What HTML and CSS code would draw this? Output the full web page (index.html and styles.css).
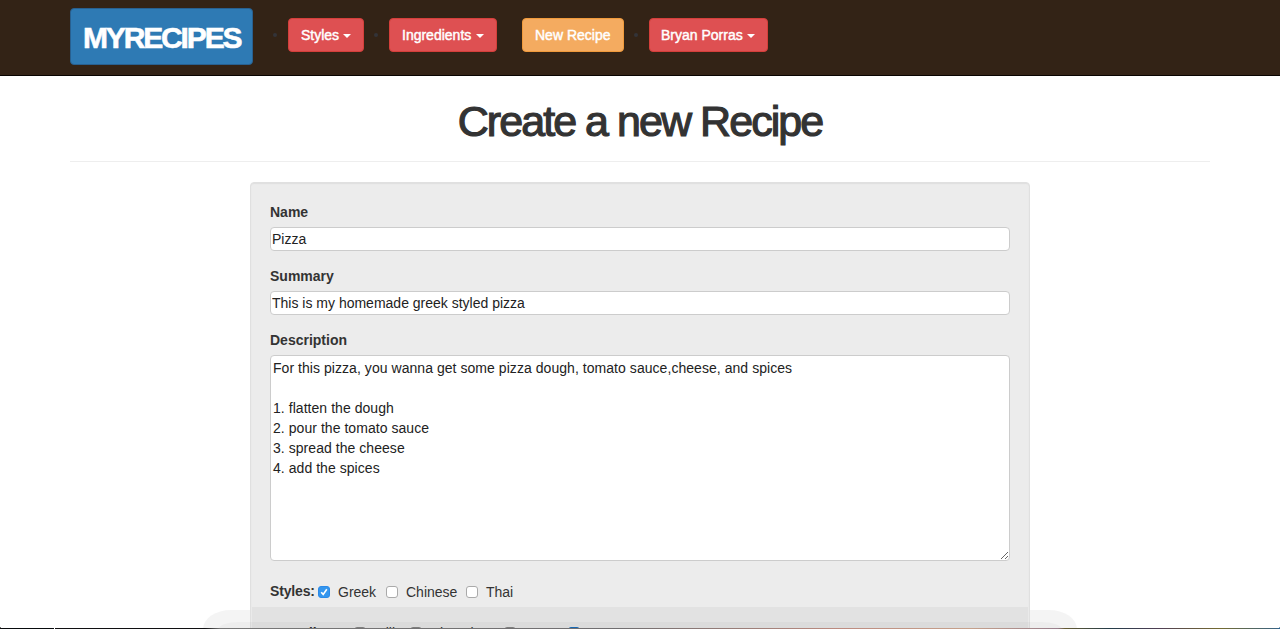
FILE: index.html
```html
<!DOCTYPE html>
<html lang="en">
<head>
<meta charset="utf-8">
<title>MyRecipes</title>
<link rel="stylesheet" href="styles.css">
</head>
<body>
<header class="navbar">
  <div class="container nav-row">
    <a class="logo"><span>MYRECIPES</span></a>
    <ul class="nav">
      <li class="dot"><a class="btn styles"><span>Styles</span><i class="caret"></i></a></li>
      <li class="dot"><a class="btn ingredients"><span>Ingredients</span><i class="caret"></i></a></li>
      <li><a class="btn warning"><span>New Recipe</span></a></li>
      <li class="dot"><a class="btn user"><span>Bryan Porras</span><i class="caret"></i></a></li>
    </ul>
  </div>
</header>
<main class="container">
  <h1><span>Create a new Recipe</span></h1>
  <form class="well">
    <label class="label" for="name">Name</label>
    <input class="field" id="name" value="Pizza">
    <label class="label" for="summary">Summary</label>
    <input class="field" id="summary" value="This is my homemade greek styled pizza">
    <label class="label" for="description">Description</label>
    <textarea class="field area" id="description">For this pizza, you wanna get some pizza dough, tomato sauce,cheese, and spices

1. flatten the dough
2. pour the tomato sauce
3. spread the cheese
4. add the spices</textarea>
    <div class="checks">
      <b class="styles-label">Styles:</b>
      <label class="check greek"><i class="box on"><svg viewBox="0 0 10 10"><path d="M2.2 5.2 4.2 7.4 7.8 2.2"/></svg></i>Greek</label>
      <label class="check chinese"><i class="box"></i>Chinese</label>
      <label class="check"><i class="box"></i>Thai</label>
    </div>
    <div class="checks next">
      <b class="ingredients-label">Ingredients:</b>
      <label class="check milk"><i class="box"></i>Milk</label>
      <label class="check chocolate"><i class="box"></i>Chocolate</label>
      <label class="check sugar"><i class="box"></i>Sugar</label>
      <label class="check"><i class="box on"></i>Tomato</label>
    </div>
  </form>
</main>
<div class="panel-shade"></div>
<div class="dock-shade"><div class="dock-inner"></div></div>
<div class="desktop-edge"></div>
<div class="corner left"></div>
<div class="corner right"></div>
</body>
</html>
```
FILE: styles.css
```css
* { box-sizing: border-box; }
html, body { margin: 0; height: 629px; overflow: hidden; }
body { position: relative; background: #fff; color: #333; font: 14px/20px "Helvetica Neue", "Liberation Sans", Arial, sans-serif; }
.container { width: 1140px; margin: 0 auto; }
.navbar { height: 76px; background: #332316; border-bottom: 1px solid #090401; }
.nav-row { display: flex; align-items: flex-start; padding-top: 8px; }
.logo { width: 183px; height: 57px; padding: 12px; border: 1px solid #286090; border-radius: 4px; background: #2e7ab4; color: #fff; font-size: 30px; font-weight: 700; line-height: 34px; letter-spacing: -2.15px; white-space: nowrap; -webkit-text-stroke: .6px #fff; }
.nav { display: flex; gap: 25px; margin: 10px 0 0 35px; padding: 0; list-style: none; }
.nav li { display: flex; position: relative; }
.dot::before { content: ""; position: absolute; left: -15px; top: 15px; width: 4px; height: 4px; border-radius: 50%; background: #333338; }
.btn { display: flex; align-items: center; padding-left: 12px; height: 34px; border: 1px solid #d43f3a; border-radius: 4px; background: #de5052; color: #fff; letter-spacing: 0; white-space: nowrap; -webkit-text-stroke: .45px #fff; }
.styles { width: 76px; }
.ingredients { width: 108px; }
.warning { width: 102px; border-color: #f09a3c; background: #f4ab60; }
.user { width: 119px; padding-left: 11px; }
.caret { margin: 2px 12px 0 auto; border: 4px solid transparent; border-top-color: #fff; border-bottom: 0; }
h1 { height: 86px; margin: 0 0 20px; padding-top: 21px; border-bottom: 1px solid #eee; font-size: 43px; font-weight: 400; line-height: 48px; letter-spacing: -1.95px; text-align: center; -webkit-text-stroke: 1.2px #333; }
.well { width: 780px; height: 460px; margin: 0 auto; padding: 19px; border: 1px solid #e0e0e0; border-radius: 4px; background: #ececec; box-shadow: inset 0 1px 1px #dfdfdf; }
.label { display: block; height: 20px; margin-bottom: 5px; font-weight: 700; }
.field { display: block; width: 740px; height: 24px; margin: 0 0 15px; padding: 1px; border: 1px solid #ccc; border-radius: 4px; outline: 0; background: #fff; color: #222; font: inherit; }
.area { height: 206px; padding: 2px; line-height: 20px; letter-spacing: .05px; resize: vertical; overflow: hidden; }
.checks { display: flex; align-items: center; height: 20px; margin-top: 21px; white-space: nowrap; }
.next { margin-top: 21px; }
.styles-label { width: 48px; margin-top: -2px; letter-spacing: -.15px; }
.ingredients-label { width: 84px; }
.check { display: flex; align-items: center; }
.box { width: 12px; height: 12px; margin-right: 8px; border: 1px solid #aaa; border-radius: 3px; background: #fff; }
.on { border-color: #2b8ae8; background: #3496ee; }
.box svg { display: block; width: 10px; height: 10px; fill: none; stroke: #fff; stroke-width: 1.6; }
.next .box { border-color: #888; }
.next .on { border-color: #1b70c0; }
.greek { width: 68px; }
.chinese { width: 80px; }
.milk { width: 56px; }
.chocolate { width: 94px; }
.sugar { width: 64px; }
.panel-shade { position: absolute; left: 252px; top: 607px; width: 776px; height: 22px; background: rgba(0,0,0,.038); }
.dock-shade { position: absolute; left: 203px; top: 610px; width: 874px; height: 19px; overflow: hidden; background: linear-gradient(90deg, rgba(0,0,0,.045) 47px, transparent 47px, transparent 827px, rgba(0,0,0,.045) 827px); border-radius: 28px 28px 0 0 / 19px 19px 0 0; }
.dock-inner { height: 8px; margin: 12px 15px 0; border-radius: 20px 20px 0 0 / 8px 8px 0 0; background: rgba(0,0,0,.028); }
.desktop-edge { position: absolute; left: 0; bottom: 0; width: 1280px; height: 1px; background: linear-gradient(90deg, #080b0d 0 54px, #fff 54px 55px, #101012 55px 205px, #777 220px, #706e70 620px, #bd8b80 840px, #c6a18b 970px, #987e8c 1058px, #665b32 1065px, #243c49 1110px, #514055 1160px, #756b31 1220px, #376386 1280px); }
.corner { position: absolute; bottom: 0; width: 4px; height: 4px; }
.left { left: 0; background: radial-gradient(circle at 4px 0, transparent 4px, #111 4.5px); }
.right { right: 0; background: radial-gradient(circle at 0 0, transparent 4px, #2c6493 4.5px); }
```
